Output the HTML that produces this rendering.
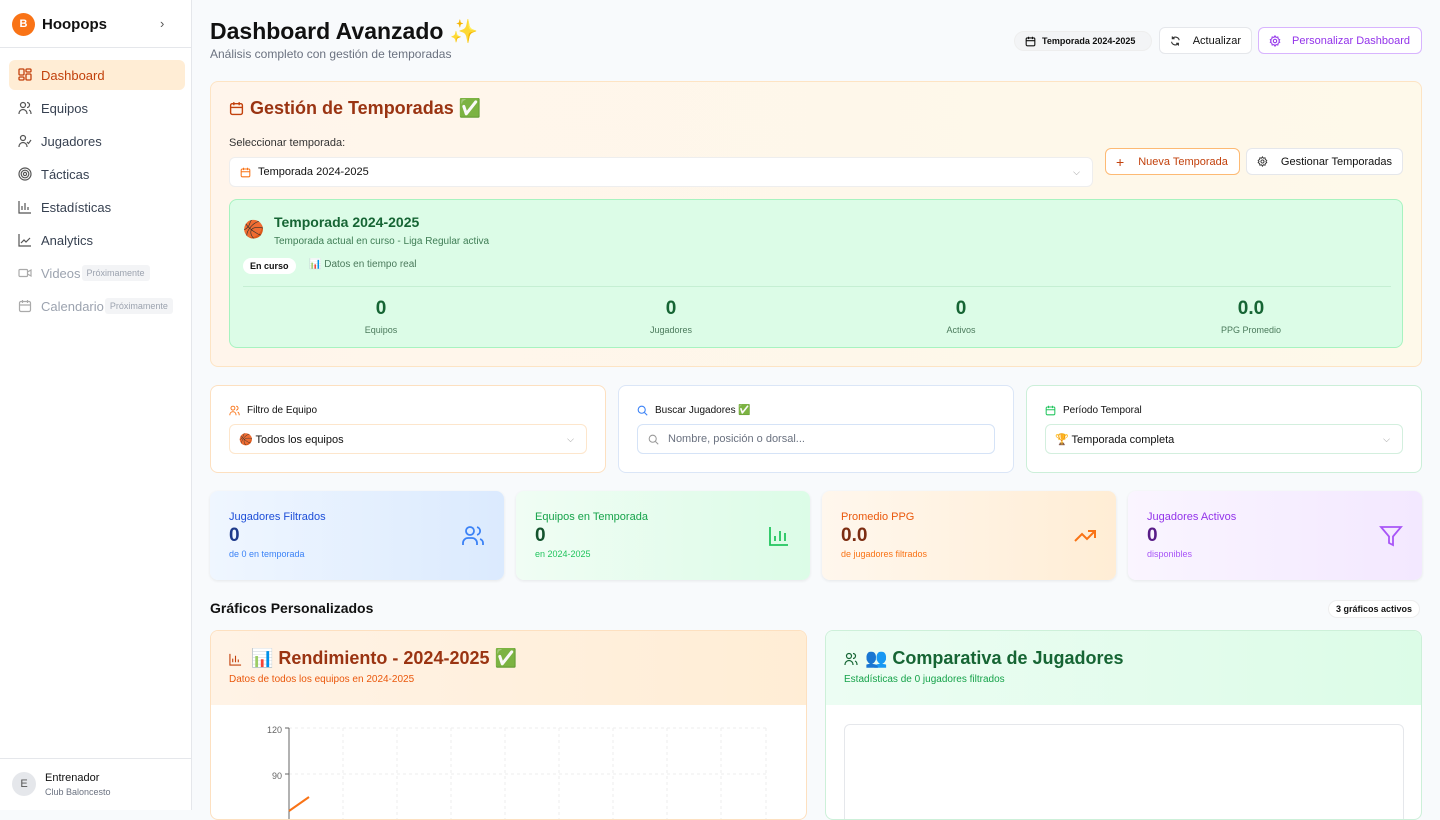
<!DOCTYPE html>
<html><head><meta charset="utf-8"><style>
*{box-sizing:border-box;margin:0;padding:0}
body{width:1440px;height:810px;overflow:hidden;background:#f8fafc;font-family:"Liberation Sans","Noto Sans CJK JP",sans-serif;color:#111;position:relative}
.a{position:absolute}
svg{display:block}
.sb{left:0;top:0;width:192px;height:810px;background:#fff;border-right:1px solid #e5e7eb}
.nav{position:absolute;left:9px;width:176px;height:30px;border-radius:6px;font-size:13px;color:#374151;display:flex;align-items:center;padding-left:9px;gap:9px;white-space:nowrap}
.pill{font-size:9px;color:#9ca3af;background:#f3f4f6;padding:3px 5px;border-radius:3px;margin-left:-8px}
.card{border-radius:8px;position:absolute}
.btn{position:absolute;height:27px;border:1px solid #e5e7eb;background:#fff;border-radius:6px;font-size:11px;display:flex;align-items:center;gap:10px;padding:0 10px;font-weight:600;white-space:nowrap}
.stat{position:absolute;top:491px;width:294px;height:89px;border-radius:8px;box-shadow:0 1px 3px rgba(0,0,0,.08)}
.stat .t{position:absolute;left:19px;top:20px;font-size:11px}
.stat .v{position:absolute;left:19px;top:34px;font-size:19px;font-weight:700}
.stat .s{position:absolute;left:19px;top:58px;font-size:9px}
.stat svg{position:absolute;right:19px;top:33px}
.num{position:absolute;top:98px;width:120px;text-align:center;color:#166534}
.num b{display:block;font-size:19px}
.num span{font-size:9px;color:#4b7a5c}
</style></head><body>
<div class="a sb">
 <div class="a" style="left:12px;top:13px;width:23px;height:23px;border-radius:50%;background:#f97316;color:#fff;font-size:11px;font-weight:700;text-align:center;line-height:23px">B</div>
 <div class="a" style="left:42px;top:16px;font-size:15px;font-weight:700">Hoopops</div>
 <div class="a" style="left:160px;top:16px;font-size:13px;color:#555">›</div>
 <div class="a" style="left:0;top:47px;width:191px;height:1px;background:#e5e7eb"></div>
 <div class="nav" style="top:60px;background:#ffedd5;color:#c2410c"><svg width="14" height="14" viewBox="0 0 14 14" fill="none" stroke="#c2410c" stroke-width="1.3"><rect x="1" y="1" width="5" height="6" rx="1"/><rect x="8" y="1" width="5" height="3" rx="1"/><rect x="8" y="6" width="5" height="6" rx="1"/><rect x="1" y="9" width="5" height="3" rx="1"/></svg>Dashboard</div>
 <div class="nav" style="top:93px"><svg width="14" height="14" viewBox="0 0 14 14" fill="none" stroke="#555" stroke-width="1.2"><circle cx="5" cy="4" r="2.5"/><path d="M1 13c0-3 2-4.5 4-4.5s4 1.5 4 4.5M9 1.5a2.5 2.5 0 010 5M11 9c1.3.5 2 2 2 4"/></svg>Equipos</div>
 <div class="nav" style="top:126px"><svg width="14" height="14" viewBox="0 0 14 14" fill="none" stroke="#555" stroke-width="1.2"><circle cx="5" cy="4" r="2.5"/><path d="M1 13c0-3 2-4.5 4-4.5s4 1.5 4 4.5M9 8l1.5 1.5L13 6"/></svg>Jugadores</div>
 <div class="nav" style="top:159px"><svg width="14" height="14" viewBox="0 0 14 14" fill="none" stroke="#555" stroke-width="1.2"><circle cx="7" cy="7" r="6"/><circle cx="7" cy="7" r="3.8"/><circle cx="7" cy="7" r="1.6"/></svg>Tácticas</div>
 <div class="nav" style="top:192px"><svg width="14" height="14" viewBox="0 0 14 14" fill="none" stroke="#555" stroke-width="1.2"><path d="M1 1v12h12M4 10V6M7 10V3M10 10V7"/></svg>Estadísticas</div>
 <div class="nav" style="top:225px"><svg width="14" height="14" viewBox="0 0 14 14" fill="none" stroke="#555" stroke-width="1.2"><path d="M1 1v12h12M3 10l3-3 2 2 4-4"/></svg>Analytics</div>
 <div class="nav" style="top:258px;color:#9ca3af"><svg width="14" height="14" viewBox="0 0 14 14" fill="none" stroke="#aaa" stroke-width="1.2"><rect x="1" y="3.5" width="8.5" height="7" rx="1"/><path d="M9.5 6l3.5-2v6l-3.5-2"/></svg>Videos<span class="pill">Próximamente</span></div>
 <div class="nav" style="top:291px;color:#9ca3af"><svg width="14" height="14" viewBox="0 0 14 14" fill="none" stroke="#aaa" stroke-width="1.2"><rect x="1.5" y="2.5" width="11" height="10" rx="1.5"/><path d="M1.5 6h11M4.5 1v3M9.5 1v3"/></svg>Calendario<span class="pill">Próximamente</span></div>
 <div class="a" style="left:0;top:758px;width:191px;height:1px;background:#e5e7eb"></div>
 <div class="a" style="left:12px;top:772px;width:24px;height:24px;border-radius:50%;background:#e5e7eb;color:#555;font-size:11px;text-align:center;line-height:24px">E</div>
 <div class="a" style="left:45px;top:772px;font-size:11px">Entrenador</div>
 <div class="a" style="left:45px;top:787px;font-size:9px;color:#6b7280">Club Baloncesto</div>
</div>

<div class="a" style="left:210px;top:18px;font-size:23px;font-weight:700">Dashboard Avanzado ✨</div>
<div class="a" style="left:210px;top:47px;font-size:12px;color:#6b7280">Análisis completo con gestión de temporadas</div>
<div class="a" style="left:1014px;top:31px;height:20px;width:138px;border-radius:10px;background:#f3f4f6;border:1px solid #eee;font-size:9px;font-weight:700;display:flex;align-items:center;gap:6px;padding-left:10px"><svg width="11" height="11" viewBox="0 0 14 14" fill="none" stroke="#111" stroke-width="1.4"><rect x="1.5" y="2.5" width="11" height="10" rx="1.5"/><path d="M1.5 6h11M4.5 1v3M9.5 1v3"/></svg>Temporada 2024-2025</div>
<div class="btn" style="left:1159px;top:27px;width:93px;font-weight:500;gap:12px"><svg width="12" height="12" viewBox="0 0 14 14" fill="none" stroke="#333" stroke-width="1.4"><path d="M12 6a5 5 0 00-9-2M2 8a5 5 0 009 2M3 1v3h3M11 13v-3H8"/></svg>Actualizar</div>
<div class="btn" style="left:1258px;top:27px;width:164px;border-color:#d8b4fe;color:#9333ea;font-weight:500;gap:11px"><svg width="12" height="12" viewBox="0 0 14 14" fill="none" stroke="#9333ea" stroke-width="1.2"><circle cx="7" cy="7" r="2"/><path d="M7 1l1.2 1.8 2.1-.5.4 2.1 1.8 1.2-1 1.4 1 1.4-1.8 1.2-.4 2.1-2.1-.5L7 13l-1.2-1.8-2.1.5-.4-2.1L1.5 8.4l1-1.4-1-1.4 1.8-1.2.4-2.1 2.1.5z"/></svg>Personalizar Dashboard</div>

<div class="card" style="left:210px;top:81px;width:1212px;height:286px;background:linear-gradient(90deg,#fff5eb,#fef9ea);border:1px solid #fde4c4"></div>
<svg class="a" style="left:229px;top:101px" width="15" height="15" viewBox="0 0 14 14" fill="none" stroke="#c2410c" stroke-width="1.3"><rect x="1.5" y="2.5" width="11" height="10" rx="1.5"/><path d="M1.5 6h11M4.5 1v3M9.5 1v3"/></svg>
<div class="a" style="left:250px;top:98px;font-size:18px;font-weight:700;color:#9a3412">Gestión de Temporadas ✅</div>
<div class="a" style="left:229px;top:137px;font-size:11px;color:#333">Seleccionar temporada:</div>
<div class="a" style="left:229px;top:157px;width:864px;height:30px;background:#fff;border:1px solid #eee;border-radius:6px;font-size:11px;display:flex;align-items:center;padding-left:10px;gap:7px"><svg width="11" height="11" viewBox="0 0 14 14" fill="none" stroke="#f97316" stroke-width="1.3"><rect x="1.5" y="2.5" width="11" height="10" rx="1.5"/><path d="M1.5 6h11M4.5 1v3M9.5 1v3"/></svg>Temporada 2024-2025<span style="position:absolute;right:12px;color:#999;font-size:9px">⌵</span></div>
<div class="btn" style="left:1105px;top:148px;width:135px;border-color:#fdba74;color:#c2410c;font-weight:500;gap:14px"><span style="font-size:14px;font-weight:400">+</span>Nueva Temporada</div>
<div class="btn" style="left:1246px;top:148px;width:157px;font-weight:500;gap:13px"><svg width="11" height="11" viewBox="0 0 14 14" fill="none" stroke="#333" stroke-width="1.2"><circle cx="7" cy="7" r="2"/><path d="M7 1l1.2 1.8 2.1-.5.4 2.1 1.8 1.2-1 1.4 1 1.4-1.8 1.2-.4 2.1-2.1-.5L7 13l-1.2-1.8-2.1.5-.4-2.1L1.5 8.4l1-1.4-1-1.4 1.8-1.2.4-2.1 2.1.5z"/></svg>Gestionar Temporadas</div>

<div class="card" style="left:229px;top:199px;width:1174px;height:149px;background:#dcfce7;border:1px solid #a7f3c0">
 <div class="a" style="left:13px;top:20px;font-size:17px">🏀</div>
 <div class="a" style="left:44px;top:14px;font-size:14px;font-weight:700;color:#166534">Temporada 2024-2025</div>
 <div class="a" style="left:44px;top:36px;font-size:10px;color:#3f7d55">Temporada actual en curso - Liga Regular activa</div>
 <div class="a" style="left:13px;top:58px;padding:3px 7px;background:#fff;border-radius:9px;font-size:9px;font-weight:700">En curso</div>
 <div class="a" style="left:79px;top:59px;font-size:10px;color:#4b7a5c">📊 Datos en tiempo real</div>
 <div class="a" style="left:13px;top:86px;width:1148px;height:1px;background:#c5efd3"></div>
 <div class="num" style="left:91px"><b>0</b><span>Equipos</span></div>
 <div class="num" style="left:381px"><b>0</b><span>Jugadores</span></div>
 <div class="num" style="left:671px"><b>0</b><span>Activos</span></div>
 <div class="num" style="left:961px"><b>0.0</b><span>PPG Promedio</span></div>
</div>

<div class="card" style="left:210px;top:385px;width:396px;height:88px;background:#fff;border:1px solid #fde0c0"></div>
<div class="a" style="left:229px;top:405px;font-size:10px;display:flex;gap:7px;align-items:center"><svg width="11" height="11" viewBox="0 0 14 14" fill="none" stroke="#f97316" stroke-width="1.2"><circle cx="5" cy="4" r="2.5"/><path d="M1 13c0-3 2-4.5 4-4.5s4 1.5 4 4.5M9 1.5a2.5 2.5 0 010 5M11 9c1.3.5 2 2 2 4"/></svg>Filtro de Equipo</div>
<div class="a" style="left:229px;top:424px;width:358px;height:30px;border:1px solid #fde6cc;border-radius:6px;font-size:11px;display:flex;align-items:center;padding-left:9px">🏀 Todos los equipos<span style="position:absolute;right:12px;color:#999;font-size:9px">⌵</span></div>

<div class="card" style="left:618px;top:385px;width:396px;height:88px;background:#fff;border:1px solid #dbe6f7"></div>
<div class="a" style="left:637px;top:405px;font-size:10px;display:flex;gap:7px;align-items:center"><svg width="11" height="11" viewBox="0 0 14 14" fill="none" stroke="#3b82f6" stroke-width="1.4"><circle cx="6" cy="6" r="4.5"/><path d="M9.5 9.5L13 13"/></svg>Buscar Jugadores ✅</div>
<div class="a" style="left:637px;top:424px;width:358px;height:30px;border:1px solid #d5e3f7;border-radius:6px;font-size:11px;color:#6b7280;display:flex;align-items:center;padding-left:10px;gap:9px"><svg width="11" height="11" viewBox="0 0 14 14" fill="none" stroke="#999" stroke-width="1.3"><circle cx="6" cy="6" r="4.5"/><path d="M9.5 9.5L13 13"/></svg>Nombre, posición o dorsal...</div>

<div class="card" style="left:1026px;top:385px;width:396px;height:88px;background:#fff;border:1px solid #ccefd9"></div>
<div class="a" style="left:1045px;top:405px;font-size:10px;display:flex;gap:7px;align-items:center"><svg width="11" height="11" viewBox="0 0 14 14" fill="none" stroke="#22c55e" stroke-width="1.3"><rect x="1.5" y="2.5" width="11" height="10" rx="1.5"/><path d="M1.5 6h11M4.5 1v3M9.5 1v3"/></svg>Período Temporal</div>
<div class="a" style="left:1045px;top:424px;width:358px;height:30px;border:1px solid #d3efde;border-radius:6px;font-size:11px;display:flex;align-items:center;padding-left:9px">🏆 Temporada completa<span style="position:absolute;right:12px;color:#999;font-size:9px">⌵</span></div>

<div class="stat" style="left:210px;background:linear-gradient(90deg,#eff6ff,#dbeafe)"><div class="t" style="color:#1d4ed8">Jugadores Filtrados</div><div class="v" style="color:#1e3a8a">0</div><div class="s" style="color:#3b82f6">de 0 en temporada</div><svg width="24" height="24" viewBox="0 0 24 24" fill="none" stroke="#3b82f6" stroke-width="1.8"><circle cx="9" cy="7" r="4"/><path d="M2 21v-2a5 5 0 015-5h4a5 5 0 015 5v2M16 3.1a4 4 0 010 7.8M22 21v-2a4 4 0 00-3-3.9"/></svg></div>
<div class="stat" style="left:516px;background:linear-gradient(90deg,#f0fdf4,#dcfce7)"><div class="t" style="color:#16a34a">Equipos en Temporada</div><div class="v" style="color:#14532d">0</div><div class="s" style="color:#22c55e">en 2024-2025</div><svg width="24" height="24" viewBox="0 0 24 24" fill="none" stroke="#22c55e" stroke-width="1.8"><path d="M3 3v18h18M8 17v-5M13 17V7M18 17v-8"/></svg></div>
<div class="stat" style="left:822px;background:linear-gradient(90deg,#fff7ed,#ffedd5)"><div class="t" style="color:#ea580c">Promedio PPG</div><div class="v" style="color:#7c2d12">0.0</div><div class="s" style="color:#f97316">de jugadores filtrados</div><svg width="24" height="24" viewBox="0 0 24 24" fill="none" stroke="#f97316" stroke-width="2"><path d="M2 17l7-7 5 5 8-8M15 7h7v7"/></svg></div>
<div class="stat" style="left:1128px;background:linear-gradient(90deg,#faf5ff,#f3e8ff)"><div class="t" style="color:#9333ea">Jugadores Activos</div><div class="v" style="color:#581c87">0</div><div class="s" style="color:#a855f7">disponibles</div><svg width="24" height="24" viewBox="0 0 24 24" fill="none" stroke="#a855f7" stroke-width="1.8"><path d="M22 3H2l8 9.5V19l4 2v-8.5z"/></svg></div>

<div class="a" style="left:210px;top:600px;font-size:14px;font-weight:700">Gráficos Personalizados</div>
<div class="a" style="left:1328px;top:600px;padding:3px 7px;font-size:9px;font-weight:700;background:#fff;border:1px solid #eee;border-radius:9px">3 gráficos activos</div>

<div class="card" style="left:210px;top:630px;width:597px;height:190px;background:#fff;border:1px solid #fde0c0;overflow:hidden">
 <div class="a" style="left:0;top:0;width:597px;height:74px;background:linear-gradient(90deg,#fff3e6,#ffedd5)"></div>
 <svg class="a" style="left:18px;top:22px" width="13" height="13" viewBox="0 0 14 14" fill="none" stroke="#c2410c" stroke-width="1.2"><path d="M1 1v12h12M4 10V6M7 10V3M10 10V7"/></svg>
 <div class="a" style="left:40px;top:17px;font-size:18px;font-weight:700;color:#9a3412">📊 Rendimiento - 2024-2025 ✅</div>
 <div class="a" style="left:18px;top:43px;font-size:10px;color:#ea580c">Datos de todos los equipos en 2024-2025</div>
 <svg class="a" style="left:0;top:75px" width="597" height="120"><g stroke="#eee" stroke-dasharray="3 3"><path d="M78 22H555M78 68H555M132 22V120M186 22V120M240 22V120M294 22V120M348 22V120M402 22V120M456 22V120M510 22V120M555 22V120"/></g><path d="M78 22V120M74 22H78M74 68H78" stroke="#666"/><text x="71" y="27" font-size="9" fill="#666" text-anchor="end" font-family="Liberation Sans">120</text><text x="71" y="73" font-size="9" fill="#666" text-anchor="end" font-family="Liberation Sans">90</text><path d="M78 105L98 91" stroke="#f97316" stroke-width="2"/></svg>
</div>
<div class="card" style="left:825px;top:630px;width:597px;height:190px;background:#fff;border:1px solid #cdf0d9;overflow:hidden">
 <div class="a" style="left:0;top:0;width:597px;height:74px;background:linear-gradient(90deg,#ecfdf3,#dcfce7)"></div>
 <svg class="a" style="left:18px;top:21px" width="14" height="14" viewBox="0 0 14 14" fill="none" stroke="#166534" stroke-width="1.2"><circle cx="5" cy="4" r="2.5"/><path d="M1 13c0-3 2-4.5 4-4.5s4 1.5 4 4.5M9 1.5a2.5 2.5 0 010 5M11 9c1.3.5 2 2 2 4"/></svg>
 <div class="a" style="left:39px;top:17px;font-size:18px;font-weight:700;color:#166534">👥 Comparativa de Jugadores</div>
 <div class="a" style="left:18px;top:43px;font-size:10px;color:#16a34a">Estadísticas de 0 jugadores filtrados</div>
 <div class="a" style="left:18px;top:93px;width:560px;height:120px;border:1px solid #e5e7eb;border-radius:6px"></div>
</div>
</body></html>
